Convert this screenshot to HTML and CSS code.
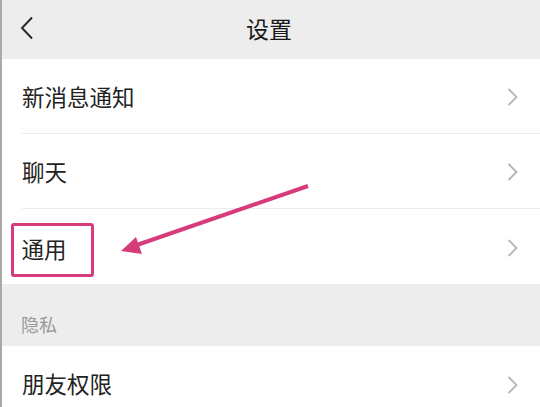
FILE: index.html
```html
<!DOCTYPE html>
<html>
<head>
  <title>设置</title>
  <link rel="stylesheet" href="styles.css">
</head>
<body>
<div class="screen">
  <div class="topbar">
    <svg class="back" width="14" height="24" viewBox="0 0 14 24"><path d="M12 1.5 L2 12 L12 22.5" fill="none" stroke="#2a2a2a" stroke-width="2"/></svg>
    <div class="title">设置</div>
  </div>

  <div class="group">
    <div class="row"><span>新消息通知</span><svg class="arrow" width="11" height="18" viewBox="0 0 11 18"><path d="M1.5 1 L9.5 9 L1.5 17" fill="none" stroke="#b4b4b4" stroke-width="1.8"/></svg></div>
    <div class="row"><span>聊天</span><svg class="arrow" width="11" height="18" viewBox="0 0 11 18"><path d="M1.5 1 L9.5 9 L1.5 17" fill="none" stroke="#b4b4b4" stroke-width="1.8"/></svg></div>
    <div class="row"><span class="mark">通用</span><svg class="arrow" width="11" height="18" viewBox="0 0 11 18"><path d="M1.5 1 L9.5 9 L1.5 17" fill="none" stroke="#b4b4b4" stroke-width="1.8"/></svg></div>
  </div>

  <div class="section">隐私</div>

  <div class="group">
    <div class="row"><span>朋友权限</span><svg class="arrow" width="11" height="18" viewBox="0 0 11 18"><path d="M1.5 1 L9.5 9 L1.5 17" fill="none" stroke="#b4b4b4" stroke-width="1.8"/></svg></div>
  </div>

  <svg class="pointer" width="540" height="407" viewBox="0 0 540 407">
    <line x1="308" y1="186" x2="134" y2="246" stroke="#d63b7c" stroke-width="4"/>
    <polygon points="121,251 136,237 142,254" fill="#d63b7c"/>
  </svg>
</div>
</body>
</html>
```

FILE: styles.css
```css
body {
  margin: 0;
  font-family: "Noto Sans CJK SC", "Noto Sans", sans-serif;
}

.screen {
  position: relative;
  width: 540px;
  height: 407px;
  overflow: hidden;
  background: #ededed;
  border-left: 2px solid #a9a9a9;
  box-sizing: border-box;
}

.topbar {
  height: 59px;
  display: flex;
  align-items: center;
  justify-content: center;
  position: relative;
  background: #ededed;
}

.back {
  position: absolute;
  left: 18px;
  top: 16px;
}

.title {
  font-size: 23px;
  line-height: 1;
  color: #1a1a1a;
  margin-left: -4px;
  margin-top: -3px;
}

.group {
  background: #fff;
}

.row {
  height: 75px;
  box-sizing: border-box;
  margin-left: 20px;
  padding-right: 22px;
  display: flex;
  align-items: center;
  justify-content: space-between;
  font-size: 22.5px;
  line-height: 1;
  color: #222;
  border-bottom: 1px solid #ececec;
}

.row:last-child {
  border-bottom: none;
}

.arrow {
  margin-top: 2px;
}

.mark {
  display: flex;
  align-items: center;
  box-sizing: border-box;
  width: 83px;
  height: 54px;
  margin-left: -11px;
  margin-top: 7px;
  padding: 0 0 4px 7.5px;
  border: 3.5px solid #d63b7c;
  border-radius: 3px;
}

.section {
  height: 62px;
  padding-left: 19px;
  display: flex;
  align-items: flex-end;
  padding-bottom: 9px;
  box-sizing: border-box;
  font-size: 18px;
  color: #999;
}

.pointer {
  position: absolute;
  left: -2px;
  top: 0;
  pointer-events: none;
}
```
